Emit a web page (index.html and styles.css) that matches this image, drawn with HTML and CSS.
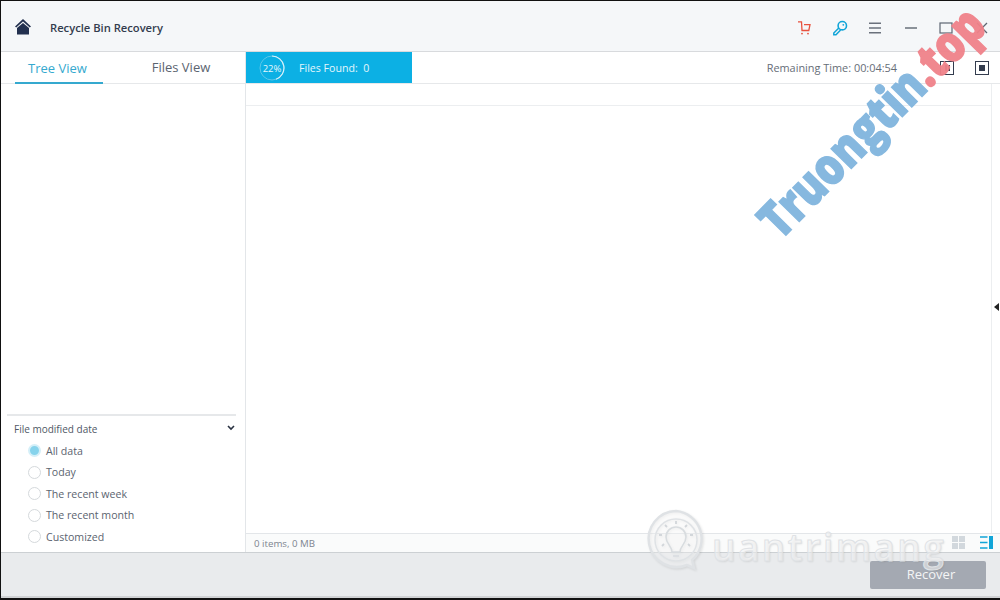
FILE: index.html
```html
<!DOCTYPE html>
<html lang="en">
<head>
<meta charset="utf-8">
<title>Recycle Bin Recovery</title>
<link rel="stylesheet" href="styles.css">
</head>
<body>
<div class="app">
  <header class="titlebar">
    <svg class="home" viewBox="0 0 16 16" width="16" height="16"><path d="M8 0 L16 7.4 L14.8 8.6 L8 2.6 L1.2 8.6 L0 7.4Z" fill="#22304f"/><path d="M8 4 L14 9 V15.5 H2 V9Z" fill="#22304f"/></svg>
    <span class="apptitle">Recycle Bin Recovery</span>
    <div class="tools">
      <svg class="ic" viewBox="0 0 16 16" width="16" height="16"><path d="M2 1.8 H5.5 L6 10.5 H12.8 L14 4.6 H8" fill="none" stroke="#e8523f" stroke-width="1.3"/><circle cx="6" cy="13.6" r="0.9" fill="#e8523f"/><circle cx="12" cy="13.6" r="0.9" fill="#e8523f"/></svg>
      <svg class="ic" viewBox="0 0 16 16" width="16" height="16"><circle cx="10.3" cy="5.7" r="4.2" fill="none" stroke="#12a5d8" stroke-width="1.6"/><path d="M6.8 8 L1.8 13 V14.8 H4 L8.6 10" fill="none" stroke="#12a5d8" stroke-width="1.5"/><circle cx="11.3" cy="4.8" r="0.9" fill="#12a5d8"/></svg>
      <svg class="ic" viewBox="0 0 16 16" width="16" height="16"><path d="M2 3.2H14M2 8H14M2 12.8H14" stroke="#6a717c" stroke-width="1.5"/></svg>
      <svg class="ic" viewBox="0 0 16 16" width="16" height="16"><path d="M2 8H14" stroke="#5e6672" stroke-width="1.4"/></svg>
      <svg class="ic" viewBox="0 0 16 16" width="16" height="16"><rect x="2" y="3" width="12" height="10" fill="none" stroke="#5e6672" stroke-width="1.2"/></svg>
      <svg class="ic" viewBox="0 0 16 16" width="16" height="16"><path d="M3 3L13 13M13 3L3 13" stroke="#5e6672" stroke-width="1.3"/></svg>
    </div>
  </header>
  <div class="body">
    <aside class="side">
      <nav class="tabs">
        <span class="tab active">Tree View</span>
        <span class="tab">Files View</span>
      </nav>
      <div class="tree"></div>
      <section class="filter">
        <div class="fhead"><span>File modified date</span><svg viewBox="0 0 8 6" width="8" height="6"><path d="M1 1L4 4L7 1" fill="none" stroke="#2a3242" stroke-width="1.6"/></svg></div>
        <ul class="radios">
          <li class="on"><i></i>All data</li>
          <li><i></i>Today</li>
          <li><i></i>The recent week</li>
          <li><i></i>The recent month</li>
          <li><i></i>Customized</li>
        </ul>
      </section>
    </aside>
    <main class="main">
      <div class="status">
        <div class="progress">
          <svg viewBox="0 0 26 26" width="26" height="26"><circle cx="13" cy="13" r="12" fill="none" stroke="#5cc6e8" stroke-width="1"/><path d="M13 1 A12 12 0 0 1 17 24.3" fill="none" stroke="#d8f1fa" stroke-width="1.2"/><text x="13" y="16.5" text-anchor="middle" class="pct">22%</text></svg>
          <span class="found">Files Found:&nbsp; 0</span>
        </div>
        <span class="remain">Remaining Time: 00:04:54</span>
        <span class="ctl"><b class="pause"></b></span>
        <span class="ctl"><b class="stop"></b></span>
      </div>
      <div class="content">
        <div class="thead"></div>
        <div class="list"></div>
        <div class="foot">
          <span>0 items, 0 MB</span>
          <div class="views">
            <svg viewBox="0 0 13 13" width="13" height="13"><path d="M0 0H6V6H0ZM7 0H13V6H7ZM0 7H6V13H0ZM7 7H13V13H7Z" fill="#d2d8dd"/></svg>
            <svg viewBox="0 0 13 13" width="13" height="13"><path d="M0 1H7.5M0 6.5H7.5M0 12H7.5" stroke="#12a5d8" stroke-width="1.6"/><rect x="9" y="0" width="4" height="13" fill="#12a5d8"/></svg>
          </div>
        </div>
        <span class="handle"></span>
      </div>
    </main>
  </div>
  <footer class="bottom"><button class="recover">Recover</button></footer>
  <div class="wm-b">
    <svg class="wm-logo" viewBox="0 0 64 64" width="64" height="64"><path d="M32 3 A28 28 0 1 0 43 57 L50 60 L48 52 A28 28 0 0 0 32 3Z" fill="rgba(255,255,255,.35)" stroke="#dfe2e5" stroke-width="2.5"/><circle cx="32" cy="32" r="21" fill="none" stroke="#dfe2e5" stroke-width="1.5"/><path d="M28 44 C28 38 22 36 22 29 A10 10 0 0 1 42 29 C42 36 36 38 36 44 Z M29 48H35" fill="none" stroke="#d8dcdf" stroke-width="1.6"/><path d="M32 13V16M21 17L23 19M43 17L41 19M15 27H18M46 27H49M18 38L20 36M46 38L44 36" stroke="#d2d6da" stroke-width="1.8"/></svg>
    <span>uantrimang</span>
  </div>
  <div class="wm-a">Truongtin<span class="wm-top">.top</span></div>
</div>
</body>
</html>
```
FILE: styles.css
```css
* { box-sizing: border-box; }
html, body { margin: 0; height: 100%; }
body { font-family: "Open Sans", "Noto Sans", sans-serif; color: #5b6470; background: #fff; }
.app { position: relative; width: 1000px; height: 600px; display: flex; flex-direction: column; overflow: hidden; border: solid #111; border-width: 1px 0 2px 1px; }
.titlebar { height: 51px; flex: none; display: flex; align-items: center; background: #f5f7f9; border-bottom: 1px solid #d8dadd; padding-left: 14px; }
.home { margin-top: 2px; }
.apptitle { margin-left: 19px; margin-top: 2px; font-size: 11.2px; font-weight: 600; color: #333c4e; }
.tools { margin-left: auto; display: flex; gap: 19.6px; padding-right: 10px; margin-top: 3px; }
.body { flex: 1; display: flex; min-height: 0; }
.side { width: 245px; flex: none; display: flex; flex-direction: column; border-right: 1px solid #e3e6e9; }
.tabs { height: 32px; flex: none; display: flex; border-bottom: 1px solid #e6e8ea; padding-left: 14px; }
.tab { flex: none; width: 88px; height: 32px; text-align: center; font-size: 13px; line-height: 31px; color: #5b6470; }
.tab + .tab { margin-left: 20px; width: 116px; }
.tab.active { color: #35a9cf; border-bottom: 2px solid #35a9cf; line-height: 33px; padding-right: 3px; }
.tree { flex: 1; }
.filter { height: 138px; flex: none; margin: 0 9px 0 6px; border-top: 2px solid #e6e8ea; }
.fhead { display: flex; justify-content: space-between; align-items: center; height: 24px; padding: 2px 1px 0 7px; font-size: 10px; color: #4f5866; }
.fhead svg { margin-top: -2px; }
.radios { list-style: none; margin: 0; padding: 0 0 0 21px; }
.radios li { display: flex; align-items: center; height: 21.5px; font-size: 10.6px; color: #5b6470; }
.radios i { width: 13px; height: 13px; margin-right: 5px; border-radius: 50%; border: 1px solid #d5d9dc; background: #fff; }
.radios .on i { background: #86d3ec; border: 2px solid #d4eff8; }
.main { flex: 1; min-width: 0; display: flex; flex-direction: column; }
.status { height: 32px; flex: none; display: flex; align-items: center; border-bottom: 1px solid #e6e8ea; padding-right: 11px; }
.progress { width: 166px; height: 31px; background: #0cb0e4; color: #e4f6fc; display: flex; align-items: center; padding-left: 13px; font-size: 10.6px; }
.pct { font-size: 9.5px; fill: #e4f6fc; font-family: "Open Sans", sans-serif; }
.found { margin-left: 14px; }
.remain { margin-left: auto; margin-right: 43px; font-size: 10.9px; color: #666d77; }
.ctl { width: 14px; height: 14px; border: 1px solid #333c4e; display: flex; align-items: center; justify-content: center; }
.ctl + .ctl { margin-left: 21px; }
.pause { width: 5px; height: 6px; border: solid #333c4e; border-width: 0 2px; }
.stop { width: 6px; height: 6px; background: #333c4e; }
.content { flex: 1; position: relative; display: flex; flex-direction: column; min-height: 0; }
.thead { height: 22px; flex: none; border-bottom: 1px solid #eceef0; margin-right: 8px; border-right: 1px solid #eceef0; }
.list { flex: 1; margin-right: 8px; border-right: 1px solid #eceef0; }
.foot { height: 19px; flex: none; display: flex; align-items: center; justify-content: space-between; border-top: 1px solid #e3e6e9; background: #fafbfb; padding: 0 7px 0 8px; font-size: 9.7px; color: #7d858f; }
.views { display: flex; gap: 15px; margin-top: -1px; }
.handle { position: absolute; right: 1px; top: 219px; width: 0; height: 0; border: solid transparent; border-width: 4px 5px 4px 0; border-right-color: #222; }
.bottom { height: 46px; flex: none; display: flex; align-items: center; justify-content: flex-end; background: #e9ebed; border-top: 1px solid #ccd0d3; border-bottom: 2px solid #d0d2d4; padding-right: 14px; }
.recover { width: 116px; height: 28px; border: 0; border-radius: 2px; padding: 0 0 2px 6px; background: #a4a9b2; color: #f4f5f6; font: 13px "Open Sans", sans-serif; }
.wm-a { position: absolute; left: 765px; top: 201px; transform-origin: 0 50%; transform: rotate(-45.5deg) scaleX(0.82); font: 800 51px/1 "Open Sans", sans-serif; -webkit-text-stroke: 1.5px currentColor; color: #80b5de; white-space: nowrap; opacity: .95; }
.wm-top { color: #f0828a; }
.wm-b { position: absolute; left: 643px; top: 507px; display: flex; align-items: center; pointer-events: none; }
.wm-logo { filter: drop-shadow(1px 1px 1px rgba(0,0,0,.1)); }
.wm-b span { font: 600 37px/1 "Open Sans", sans-serif; color: rgba(255,255,255,.55); -webkit-text-stroke: 1px #dfe2e5; text-shadow: 1px 1px 2px rgba(0,0,0,.1); letter-spacing: 2.4px; margin: 12px 0 0 4px; }
```
